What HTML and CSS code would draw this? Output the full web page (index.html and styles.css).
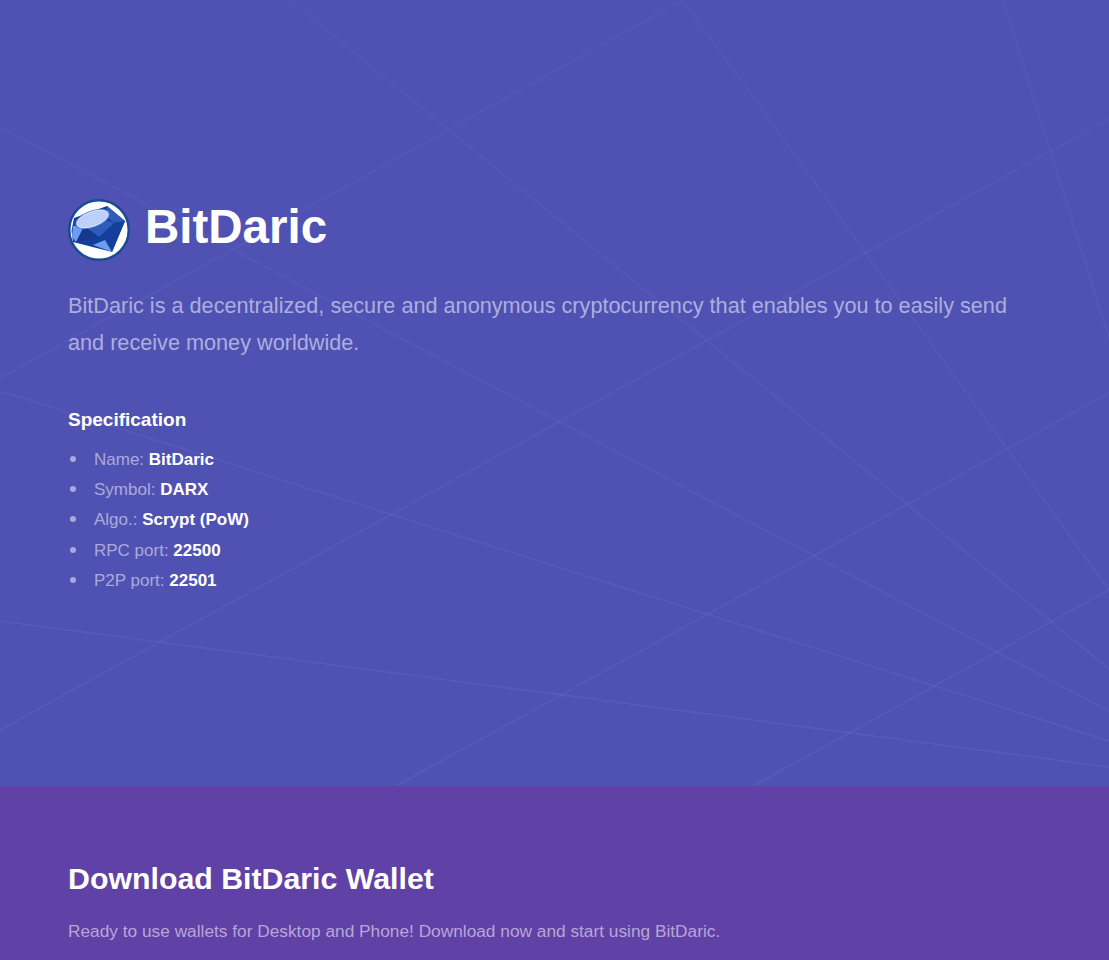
FILE: index.html
```html
<!DOCTYPE html>
<html lang="en">

<head>
  <meta charset="UTF-8">
  <meta name="viewport" content="width=device-width, initial-scale=1.0">
  <title>BitDaric</title>
  <link rel="stylesheet" href="styles.css">
</head>

<body>
  <section class="hero">
    <svg class="hero-lines" viewBox="0 0 1109 786" width="1109" height="786" aria-hidden="true">
      <defs>
        <linearGradient id="lineFade" gradientUnits="userSpaceOnUse" x1="0" y1="0" x2="0" y2="786">
          <stop offset="0" stop-color="#fff" stop-opacity="0.028"></stop>
          <stop offset="1" stop-color="#fff" stop-opacity="0.052"></stop>
        </linearGradient>
      </defs>
      <g fill="none" stroke="url(#lineFade)" stroke-width="1.5">
        <path d="M683 0 L1109 590"></path>
        <path d="M1003 0 L1109 338"></path>
        <path d="M1109 119 L0 730"></path>
        <path d="M683 0 L0 378"></path>
        <path d="M0 127 L1109 711"></path>
        <path d="M290 0 L1109 669"></path>
        <path d="M0 391 L1109 741"></path>
        <path d="M0 621 L1109 767"></path>
        <path d="M1109 393 L396 786"></path>
        <path d="M1109 590 L753 786"></path>
      </g>
    </svg>

    <div class="hero-content">
      <div class="brand">
        <svg class="brand-logo" viewBox="0 0 62 62" width="62" height="62" aria-hidden="true">
          <circle cx="31" cy="31" r="29.75" fill="#fff" stroke="#1b4a94" stroke-width="2.5"></circle>
          <polygon points="6,19 39,7 57,22 44,53 5,43 3.5,32" fill="#123f9b"></polygon>
          <polygon points="39,7 57,22 46,24 38,17" fill="#2d5db9"></polygon>
          <polygon points="16,27 38,21 46,24 31,38" fill="#2d5db9"></polygon>
          <polygon points="46,24 57,22 44,53 42,40" fill="#15409a"></polygon>
          <polygon points="16,27 31,38 8,43" fill="#16398c"></polygon>
          <polygon points="5,27 16,27 8,43 4,38" fill="#6d9df0"></polygon>
          <polygon points="25,46 37,41 44,53" fill="#6d9df0"></polygon>
          <ellipse cx="24.5" cy="20" rx="18" ry="8.5" transform="rotate(-20 24.5 20)" fill="#4f7fe0"></ellipse>
          <ellipse cx="24.5" cy="20" rx="16.5" ry="7.2" transform="rotate(-20 24.5 20)" fill="#bcd0fa" stroke="#e6eeff" stroke-width="0.8"></ellipse>
        </svg>
        <h1>BitDaric</h1>
      </div>

      <p class="lead">BitDaric is a decentralized, secure and anonymous cryptocurrency that enables you to easily send and receive money worldwide.</p>

      <h3>Specification</h3>
      <ul class="spec-list">
        <li>Name: <strong>BitDaric</strong></li>
        <li>Symbol: <strong>DARX</strong></li>
        <li>Algo.: <strong>Scrypt (PoW)</strong></li>
        <li>RPC port: <strong>22500</strong></li>
        <li>P2P port: <strong>22501</strong></li>
      </ul>
    </div>
  </section>

  <section class="download">
    <h2>Download BitDaric Wallet</h2>
    <p>Ready to use wallets for Desktop and Phone! Download now and start using BitDaric.</p>
  </section>
</body>

</html>
```

FILE: styles.css
```css
html,
body {
  margin: 0;
  padding: 0;
  height: 960px;
  overflow: hidden;
}

body {
  font-family: 'Liberation Sans', Arial, sans-serif;
  background-color: #6041a5;
  color: #a9aadb;
}

.hero {
  position: relative;
  height: 786px;
  background-color: #5052b3;
  overflow: hidden;
}

.hero-lines {
  position: absolute;
  top: 0;
  left: 0;
}

.hero-content {
  position: relative;
  padding: 199px 68px 0;
}

.brand {
  display: flex;
  align-items: flex-start;
  gap: 15px;
}

.brand-logo {
  flex-shrink: 0;
}

h1 {
  margin: 0;
  font-size: 47.5px;
  line-height: 56px;
  color: #fff;
}

.lead {
  margin: 26px 0 0;
  font-size: 21.66px;
  line-height: 37px;
  color: #adaedd;
}

h3 {
  margin: 46px 0 0;
  font-size: 19px;
  line-height: 26px;
  color: #fff;
}

.spec-list {
  margin: 11.75px 0 0;
  padding: 0;
  list-style: none;
  font-size: 17px;
  line-height: 30.25px;
}

.spec-list li::before {
  content: "";
  display: inline-block;
  width: 6px;
  height: 6px;
  margin: 0 18px 0 2px;
  border-radius: 50%;
  background-color: #a9aadb;
  vertical-align: 3px;
}

.spec-list strong {
  color: #fff;
}

.download {
  padding: 73px 68px 0;
  color: #b7a6d8;
}

.download h2 {
  margin: 0;
  font-size: 30.3px;
  line-height: 40px;
  color: #fff;
}

.download p {
  margin: 19px 0 0;
  font-size: 17.3px;
  line-height: 26px;
}
```
